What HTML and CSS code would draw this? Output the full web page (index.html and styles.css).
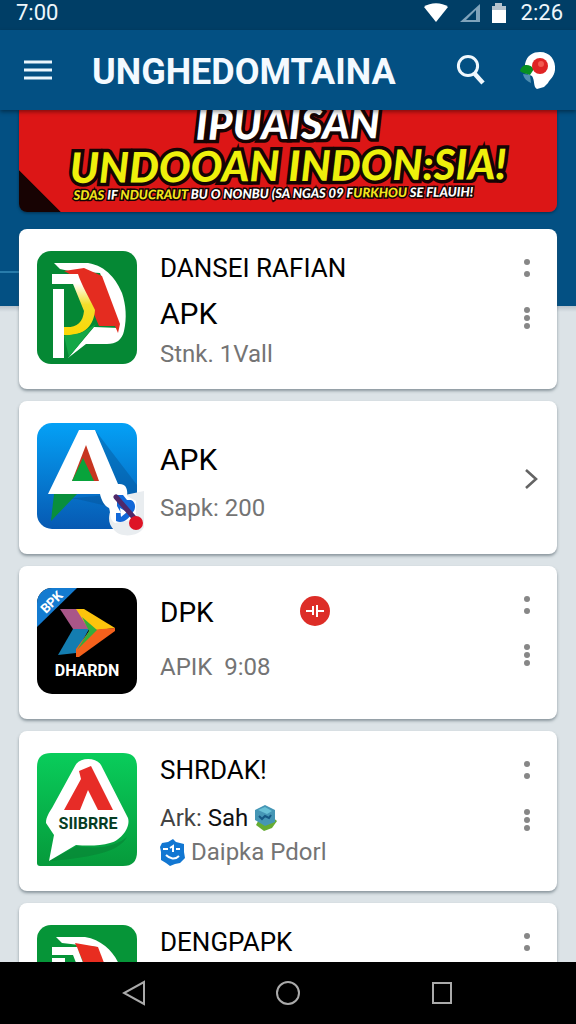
FILE: index.html
```
<!DOCTYPE html>
<html lang="id">
<head>
  <meta charset="UTF-8">
  <meta name="viewport" content="width=device-width, initial-scale=1.0">
  <title>UNGHEDOMTAINA</title>
  <link rel="stylesheet" href="styles.css">
</head>
<body>
  <div class="status-bar">
    <span>7:00</span>
    <div class="status-right">
      <svg width="26" height="20" viewBox="0 0 26 20"><path d="M1 4C7-1 19-1 25 4L13 19Z" fill="#fff"/></svg>
      <svg width="22" height="20" viewBox="0 0 22 20"><path d="M1 19 21 1V19Z" fill="#7fa3bb"/><path d="M7 17 17 7V17Z" fill="#003e66"/></svg>
      <svg width="16" height="20" viewBox="0 0 16 20"><path d="M4 0H11V3H15V8H1V3H4Z" fill="#b5c3ce"/><path d="M1 7H15V20H1Z" fill="#fff"/></svg>
      <span>2:26</span>
    </div>
  </div>

  <header class="app-bar">
    <button class="icon-btn" aria-label="Menu">
      <svg width="28" height="20" viewBox="0 0 28 20"><path d="M0 2H28M0 10H28M0 18H28" stroke="#eaf6fd" stroke-width="3"/></svg>
    </button>
    <h1>UNGHEDOMTAINA</h1>
    <button class="icon-btn search" aria-label="Search">
      <svg width="30" height="32" viewBox="0 0 30 32" fill="none" stroke="#f0f8fd"><circle cx="12" cy="12" r="9.6" stroke-width="3"/><path d="M18 19 27 29" stroke-width="4.5"/></svg>
    </button>
    <button class="icon-btn" aria-label="Account">
      <svg width="36" height="38" viewBox="0 0 36 38">
        <path d="M5 13C7 4 13 1 20 1C30 1 36 9 35 19C34 26 30 28 28 32L24 36L17 38C13 36 15 29 12 25L5 22Z" fill="#fff"/>
        <path d="M3 23 10 24 11 32C7 30 4 28 3 23Z" fill="#4f8eb0"/>
        <path d="M0 20C2 12 10 13 14 18L10 24C6 22 3 23 0 20Z" fill="#078f20"/>
        <circle cx="20" cy="15" r="8" fill="#df2424"/><circle cx="21" cy="13" r="3" fill="#f25a50"/>
      </svg>
    </button>
  </header>

  <main>
    <section class="banner">
      <div class="banner-text">
        <h2>IPUAISAN</h2>
        <h2 class="yellow">UNDOOAN INDON:SIA!</h2>
        <p><b>SDAS</b> IF <b>NDUCRAUT</b> BU O NONBU (SA NGAS 09 F<b>URKHOU</b> SE FLAUIH!</p>
      </div>
    </section>

    <article class="card">
      <svg class="app-icon tall" viewBox="0 0 100 113" role="img" aria-label="Dansei Rafian">
        <defs><linearGradient id="leaf" x1="0" y1="0" x2="0" y2="1"><stop offset=".15" stop-color="#fff"/><stop offset=".5" stop-color="#f4df2b"/><stop offset="1" stop-color="#fbd705"/></linearGradient></defs>
        <rect width="100" height="113" rx="14" fill="#058834"/>
        <path d="M17 12H51C70 15 80 30 85 42C89 54 90 67 87 80C85 89 79 93 70 93H49L31 107L57 76L82 77L63 22L32 20L23 18Z" fill="#fff"/>
        <path d="M27 20 47 17 65 25 83 73 81 82 78 75H62L42 28Z" fill="#e42c20"/>
        <path d="M15 23H41C44 33 53 48 58 59C57 75 46 86 27 84V76C39 77 46 72 47 60L36 33H15Z" fill="url(#leaf)"/>
        <path d="M16 38H27V107H16Z" fill="#fff"/>
        <path d="M27 85 44 82 59 73 48 86 32 106Z" fill="#14a746"/>
      </svg>
      <div class="info">
        <h3>DANSEI RAFIAN</h3>
        <h3 class="large second">APK</h3>
        <p class="close">Stnk. 1Vall</p>
      </div>
      <div class="actions">
        <button aria-label="Options"><svg width="8" height="20"><circle cx="4" cy="4" r="3"/><circle cx="4" cy="16" r="3"/></svg></button>
        <button aria-label="More"><svg width="8" height="24"><circle cx="4" cy="4" r="3"/><circle cx="4" cy="12" r="3"/><circle cx="4" cy="20" r="3"/></svg></button>
      </div>
    </article>

    <article class="card">
      <svg class="app-icon" viewBox="0 0 100 106" role="img" aria-label="APK">
        <defs><linearGradient id="sky" x1="0" y1="0" x2="0" y2="1"><stop stop-color="#04a1f6"/><stop offset="1" stop-color="#0759b2"/></linearGradient></defs>
        <rect width="100" height="106" rx="15" fill="url(#sky)"/>
        <path d="M58 7 100 62V90L40 76H28L70 72Z" fill="#064f91" opacity=".4"/>
        <path d="M17 71H40L14 98Z" fill="#098f3c"/>
        <path d="M107 68V104C103 113 85 116 77 107C71 101 71 94 74 86L88 72Z" fill="#e9edf0"/>
        <path d="M42 7H58L81 61C89 60 91 66 90 73L99 78V96L78 100C72 97 74 90 72 85C67 83 64 76 63 71H11Z" fill="#fff"/>
        <path d="M49 22 62 58H35Z" fill="#c73520"/>
        <path d="M46 35 57 58H35Z" fill="#08a33b"/>
        <path d="M80 72H86L90 77H94C99 79 99 86 96 89C92 96 86 101 79 98V90H84L80 83Z" fill="#1268d8"/>
        <path d="M83 85 90 89 84 94Z" fill="#fff"/>
        <path d="M79 74 99 97" stroke="#502969" stroke-width="5" stroke-linecap="round"/><circle cx="99" cy="100" r="7" fill="#dd1425"/>
      </svg>
      <div class="info centered">
        <h3 class="large">APK</h3>
        <p class="spaced">Sapk: 200</p>
      </div>
      <button class="chevron" aria-label="Open"><svg width="16" height="22" viewBox="0 0 16 22"><path d="M3 2 13 11 3 20" fill="none" stroke="#646464" stroke-width="2.6"/></svg></button>
    </article>

    <article class="card">
      <svg class="app-icon" viewBox="0 0 100 106" role="img" aria-label="DPK">
        <defs><clipPath id="round"><rect width="100" height="106" rx="15"/></clipPath></defs>
        <rect width="100" height="106" rx="15"/>
        <path d="M0 0H40L0 39Z" fill="#147bd0" clip-path="url(#round)"/>
        <text class="ribbon" x="9" y="26" transform="rotate(-45 9 26)">BPK</text>
        <path d="M23 21H41L52 41H36Z" fill="#a95688"/>
        <path d="M39 21H47L78 40 53 43Z" fill="#fdc40c"/>
        <path d="M36 41H52L39 65 21 67Z" fill="#147db0"/>
        <path d="M78 40 78 43 42 69H39V61L53 42Z" fill="#f4611c"/>
        <path d="M45 29 60 42 40 62 52 43Z" fill="#32ae3c"/>
        <text class="icon-name" x="50" y="88" fill="#fff">DHARDN</text>
      </svg>
      <div class="info upper">
        <h3 class="medium">DPK</h3>
        <p class="wide">APIK&nbsp; 9:08</p>
      </div>
      <svg class="badge" width="30" height="30" viewBox="0 0 30 30"><circle cx="15" cy="15" r="15" fill="#dd2d27"/><path d="M6 15H13M17 15H24M13 10V19M17 9V21" stroke="#fff" stroke-width="2"/></svg>
      <div class="actions">
        <button aria-label="Options"><svg width="8" height="20"><circle cx="4" cy="4" r="3"/><circle cx="4" cy="16" r="3"/></svg></button>
        <button aria-label="More"><svg width="8" height="24"><circle cx="4" cy="4" r="3"/><circle cx="4" cy="12" r="3"/><circle cx="4" cy="20" r="3"/></svg></button>
      </div>
    </article>

    <article class="card">
      <svg class="app-icon tall" viewBox="0 0 100 113" role="img" aria-label="Shrdak">
        <defs><linearGradient id="green" x1="0" y1="0" x2="0" y2="1"><stop stop-color="#09cd5b"/><stop offset="1" stop-color="#069a3b"/></linearGradient></defs>
        <path d="M14 0H86Q100 0 100 14V99Q100 113 86 113H3Q0 113 0 110V14Q0 0 14 0Z" fill="url(#green)"/>
        <path d="M12 108 40 93C65 97 80 92 90 84C82 98 60 104 12 108Z" fill="#087c32" opacity=".5"/>
        <path d="M38 13C42 4 59 4 64 12L91 65C94 75 83 88 73 90C63 93 50 93 39 92L12 108L17 82L9 70C9 64 12 60 15 55Z" fill="#fff"/>
        <path d="M42 18 54 13 76 57H61L51 37 43 57H27L44 26Z" fill="#e72c27"/>
        <text class="icon-name" x="51" y="76" fill="#063d24">SIIBRRE</text>
      </svg>
      <div class="info">
        <h3>SHRDAK!</h3>
        <p class="line-icon spaced">Ark: <b>Sah</b>
          <svg width="24" height="26" viewBox="0 0 24 26"><path d="M10 5 23 16 18 23 10 26 2 20Z" fill="#66ac32"/><path d="M11 0 21 5V17L11 21 1 15V5Z" fill="#4596b5"/><path d="M4 5 11 2 18 6 13 9Z" fill="#69c1d6"/><path d="M5 11 8 14 11 11 15 13 17 10" fill="none" stroke="#165884" stroke-width="2"/></svg>
        </p>
        <p class="line-icon small">
          <svg width="25" height="27" viewBox="0 0 25 27"><path d="M13 0 16 3 24 5V13L25 19 20 24 15 25 10 27 6 24 1 21V13L0 8 2 4 8 3Z" fill="#1277d2"/><path d="M3 10H8M10 9 13 7V13M16 10H20M6 16C10 20 15 21 19 17" fill="none" stroke="#fff" stroke-width="2"/></svg>
          Daipka Pdorl
        </p>
      </div>
      <div class="actions">
        <button aria-label="Options"><svg width="8" height="20"><circle cx="4" cy="4" r="3"/><circle cx="4" cy="16" r="3"/></svg></button>
        <button aria-label="More"><svg width="8" height="24"><circle cx="4" cy="4" r="3"/><circle cx="4" cy="12" r="3"/><circle cx="4" cy="20" r="3"/></svg></button>
      </div>
    </article>

    <article class="card">
      <svg class="app-icon tall" viewBox="0 0 100 113" role="img" aria-label="Dengpapk">
        <rect width="100" height="113" rx="14" fill="#069538"/>
        <path d="M19 12H48C66 15 78 28 83 42L87 80 49 93 66 77 60 22 25 18Z" fill="#fff"/>
        <path d="M38 18 61 22 80 72H61Z" fill="#e82d20"/>
        <path d="M15 22H40L50 48H43L36 30H15ZM15 33H28V107H16Z" fill="#fff"/>
      </svg>
      <div class="info">
        <h3>DENGPAPK</h3>
      </div>
      <div class="actions">
        <button aria-label="Options"><svg width="8" height="20"><circle cx="4" cy="4" r="3"/><circle cx="4" cy="16" r="3"/></svg></button>
      </div>
    </article>
  </main>

  <nav class="nav-bar">
    <button aria-label="Back"><svg width="24" height="26" viewBox="0 0 24 26"><path d="M22 2V24L2 13Z"/></svg></button>
    <button aria-label="Home"><svg width="24" height="26" viewBox="0 0 24 26"><circle cx="12" cy="13" r="11"/></svg></button>
    <button aria-label="Recent apps"><svg width="24" height="26" viewBox="0 0 24 26"><path d="M3 3H21V23H3Z"/></svg></button>
  </nav>
</body>
</html>
```
FILE: styles.css
```
* {
  box-sizing: border-box;
}

body {
  margin: 0;
  height: 100vh;
  display: flex;
  flex-direction: column;
  overflow: hidden;
  font-family: Roboto, "Liberation Sans", sans-serif;
  background: #dce3e7;
}

h1, h2, h3, p {
  margin: 0;
}

button {
  border: none;
  background: none;
  padding: 0;
  display: flex;
  align-items: center;
  justify-content: center;
}

svg {
  display: block;
  flex-shrink: 0;
}

/* Top bars */
.status-bar {
  flex: 0 0 30px;
  display: flex;
  justify-content: space-between;
  align-items: center;
  padding: 0 13px 4px 16px;
  background: #003e66;
  color: #eef6fb;
  font-size: 22px;
  line-height: 26px;
}

.status-right {
  display: flex;
  align-items: center;
  gap: 10px;
}

.status-right span {
  margin-left: 4px;
}

.app-bar {
  flex: 0 0 80px;
  display: flex;
  align-items: center;
  padding: 0 20px 0 24px;
  background: #035083;
  box-shadow: 0 2px 4px rgba(0, 0, 0, 0.4);
  z-index: 1;
}

.app-bar h1 {
  flex: 1;
  margin-left: 40px;
  padding-top: 4px;
  color: #f4faff;
  font-size: 36px;
  line-height: 40px;
}

.search {
  margin-right: 34px;
}

/* Content */
main {
  flex: 1;
  min-height: 0;
  overflow: hidden;
  padding: 0 19px;
  display: flex;
  flex-direction: column;
  gap: 12px;
  background:
    linear-gradient(#287cab, #287cab) 0 161px / 19px 2px no-repeat,
    linear-gradient(#035083 196px, #b9c3cb 196px, #dce3e7 202px);
}

.banner {
  flex: 0 0 102px;
  margin-bottom: 5px;
  overflow: hidden;
  border-radius: 0 0 8px 8px;
  background: linear-gradient(45deg, #170303 29px, #dc1616 30px);
  box-shadow: 0 1px 3px rgba(0, 0, 0, 0.4);
  display: flex;
  flex-direction: column;
  justify-content: flex-end;
  padding-bottom: 12px;
}

.banner-text {
  transform: rotate(-0.5deg);
  font-family: Lato, sans-serif;
  font-style: italic;
  font-weight: 900;
  text-align: center;
  white-space: nowrap;
  color: #fff;
  -webkit-text-stroke: 7px #150404;
  paint-order: stroke fill;
}

.banner-text h2 {
  font-size: 42px;
  font-weight: 900;
  line-height: 42px;
}

.banner-text .yellow {
  color: #eef00c;
}

.banner-text p {
  font-size: 13px;
  line-height: 14px;
  padding-right: 30px;
  -webkit-text-stroke-width: 3px;
}

.banner-text b {
  color: #f3e51b;
  font-weight: 900;
}

.card {
  flex-shrink: 0;
  display: flex;
  align-items: flex-start;
  padding: 22px 18px 20px;
  border-radius: 8px;
  background: #fff;
  box-shadow: 0 2px 3px rgba(60, 75, 85, 0.5);
}

.app-icon {
  width: 100px;
  height: 106px;
  margin-bottom: 5px;
  overflow: visible;
}

.app-icon.tall {
  height: 113px;
}

.icon-name {
  font: bold 16px Roboto, sans-serif;
  text-anchor: middle;
}

.ribbon {
  font: bold 13px Roboto, sans-serif;
  fill: #fff;
}

.info {
  flex: 1;
  margin-left: 23px;
  white-space: nowrap;
}

.info h3 {
  font-size: 26px;
  font-weight: 400;
  line-height: 34px;
  color: #000;
}

.info .medium {
  font-size: 28px;
}

.info .large {
  font-size: 30px;
}

.info .second {
  margin-top: 12px;
}

.info p {
  font-size: 24px;
  line-height: 30px;
  color: #747474;
}

.info .close {
  margin-top: 8px;
}

.info .spaced {
  margin-top: 16px;
}

.info .wide {
  margin-top: 22px;
}

.info.centered {
  padding-top: 20px;
}

.info.upper {
  padding-top: 8px;
}

.line-icon {
  display: flex;
  align-items: center;
  gap: 6px;
}

.info .line-icon.spaced {
  color: #444;
}

.line-icon b {
  font-weight: 400;
  color: #111;
}

.info .small {
  margin-top: 4px;
}

.badge {
  margin: 8px 185px 0 0;
}

.actions {
  display: flex;
  flex-direction: column;
  gap: 16px;
}

.actions button {
  width: 24px;
  height: 34px;
}

.actions svg {
  fill: #878787;
}

.chevron {
  align-self: center;
}

/* System navigation */
.nav-bar {
  flex: 0 0 62px;
  display: flex;
  justify-content: center;
  gap: 130px;
  background: #000;
}

.nav-bar svg {
  fill: none;
  stroke: #aaa;
  stroke-width: 2;
}
```
